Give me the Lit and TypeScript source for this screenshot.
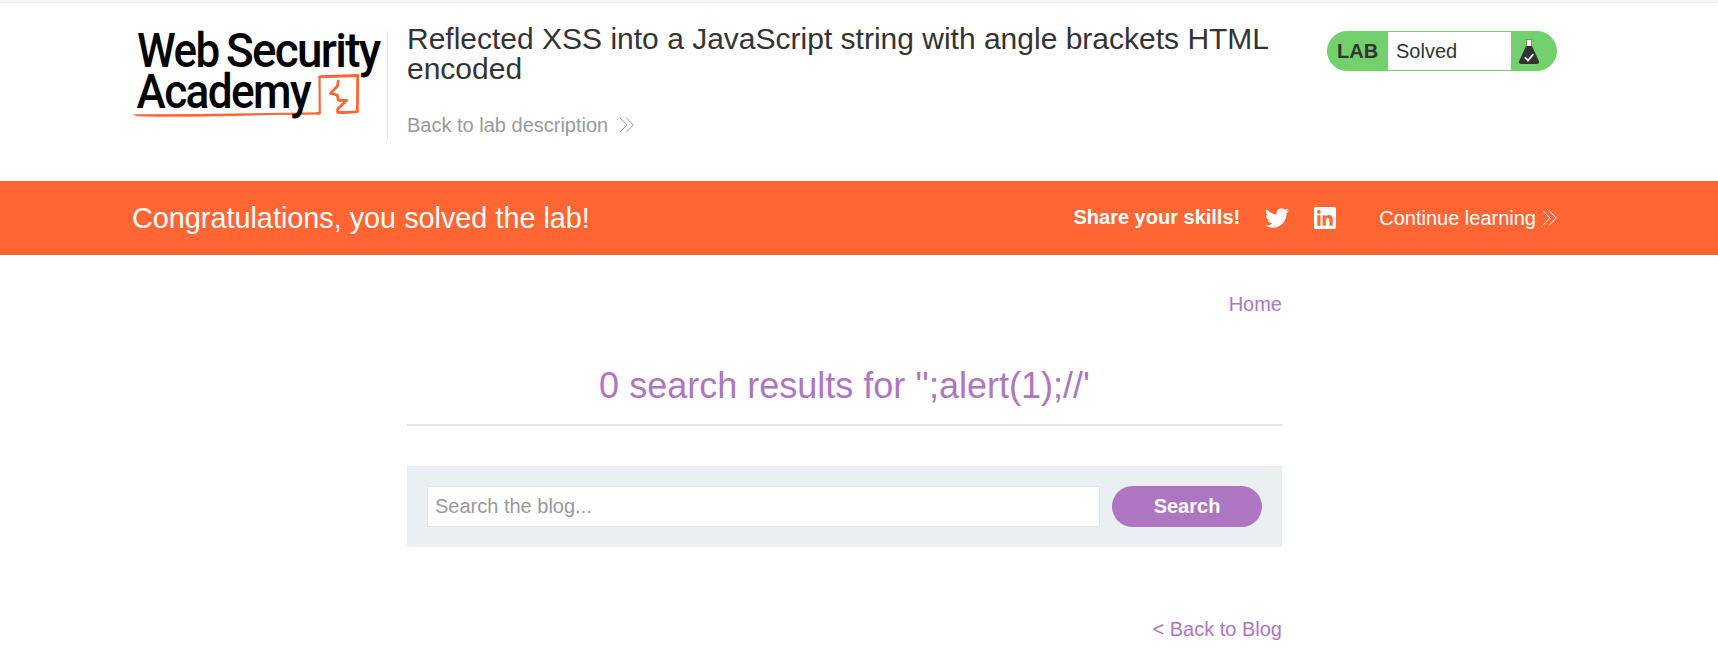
import { LitElement, html, css, svg } from "lit";
import { customElement } from "lit/decorators.js";

const chevrons = svg`<path d="M1 .8 8 8 1 15.2M7.4 .8 14.2 8 7.4 15.2" fill="none" stroke="currentColor" stroke-width="1"/>`;

@customElement("academy-logo")
class AcademyLogo extends LitElement {
  static styles = css`
    :host { display: block; width: 255px; height: 98px; }
    svg { display: block; overflow: visible; }
    .word { font-family: Roboto, sans-serif; font-weight: 500; font-size: 48.5px; letter-spacing: -1.8px; fill: #000; }
    .line { fill: none; stroke: #ff6633; stroke-linejoin: round; stroke-linecap: round; }
  `;
  render() {
    return html`<svg width="255" height="98" viewBox="0 0 255 98">
      <path d="M.3 83.200Q60 83.300 120 82.200T188 81.200L188 83.500Q140 83.800 100 85Q40 86.500 5 85.200Z" fill="#ff6633"/>
      <path class="line" stroke-width="2.200" d="M185 82.300H187.800L187.500 46"/>
      <path class="line" stroke-width="3" d="M187.800 45.800 225.700 44.500"/>
      <path class="line" stroke-width="2.800" d="M225.700 45 225.400 80.600Q214 81.800 206 81.400"/>
      <path class="line" stroke-width="2.800" d="M206.300 50 205.300 55.200 198.500 62.400 205.300 64 206.300 69.300 214.600 69.400 205.700 78V81"/>
      <text class="word" x="5" y="36" textLength="81.500" lengthAdjust="spacingAndGlyphs">Web</text>
      <text class="word" x="94" y="36" textLength="153.500" lengthAdjust="spacingAndGlyphs">Security</text>
      <text class="word" x="4.500" y="76.500" textLength="173.500" lengthAdjust="spacingAndGlyphs">Academy</text>
    </svg>`;
  }
}

@customElement("lab-status")
class LabStatus extends LitElement {
  static styles = css`
    :host { display: flex; box-sizing: border-box; width: 230px; height: 40px; border: 1px solid #72d16d; border-radius: 20px; background: #72d16d; color: #333332; line-height: 38px; overflow: hidden; }
    .tag { width: 60px; box-sizing: border-box; padding-left: 9px; font-weight: 700; }
    .state { width: 123px; box-sizing: border-box; padding-left: 8px; background: #fff; }
    svg { display: block; margin: 7px 0 0 7px; }
  `;
  render() {
    return html`<span class="tag">LAB</span><span class="state">Solved</span>
      <svg width="22" height="26" viewBox="0 0 22 26">
        <path d="M8.500 1V8H13.500V1Z" fill="#fff"/>
        <path d="M7.500 .6H14.500M8.500 1V8M13.500 1V8" stroke="#777" stroke-width=".8"/>
        <path d="M8 7H14L21 22.500Q21.500 25 19 25H3Q.5 25 1 22.500Z" fill="#333332"/>
        <path d="M6.800 18.300 10 21.400 15.300 15.300" fill="none" stroke="#fff" stroke-width="1.700"/>
      </svg>`;
  }
}

@customElement("app-root")
class AppRoot extends LitElement {
  static styles = css`
    :host { display: block; height: 660px; overflow: hidden; background: #fff; color: #333332; font-family: "Liberation Sans", Arial, sans-serif; font-size: 20px; line-height: 24px; }
    a { color: inherit; text-decoration: none; }
    svg { display: block; }
    .strip { height: 3px; box-sizing: border-box; background: #f7f7f7; border-bottom: 1px solid #ebebeb; }
    .head { display: flex; width: 1425px; height: 178px; box-sizing: border-box; padding-top: 28px; margin-left: 132px; align-items: flex-start; }
    .intro { box-sizing: border-box; width: 920px; height: 108px; border-left: 1px solid #e5e5e5; padding-left: 19px; }
    h2 { margin: -7px 0 0; font-size: 30px; line-height: 30px; font-weight: 400; }
    .back { display: flex; align-items: center; gap: 11px; margin-top: 29px; color: #999; }
    .badge { margin-left: 20px; }
    .banner { background: #ff6633; color: #fff; height: 74px; box-sizing: border-box; padding: 0 161px 0 132px; display: flex; align-items: center; }
    .congrats { flex: 1; font-size: 28.8px; line-height: 74px; }
    .share { font-weight: 700; margin-right: 25px; margin-top: -2px; }
    .tw { margin-right: 25px; }
    .next { display: flex; align-items: center; gap: 6px; margin-left: 43px; }
    .page { width: 875px; margin-left: 407px; color: #ae75c2; }
    .home { display: block; text-align: right; padding-top: 37px; }
    h1 { margin: 50px 0 0; padding-bottom: 18px; border-bottom: 2px solid #e5e5e5; text-align: center; font-size: 36px; line-height: 40px; font-weight: 400; }
    .search { display: flex; gap: 12px; box-sizing: border-box; height: 81px; margin-top: 40px; padding: 20px; background: #eaeff2; }
    input { flex: 1; min-width: 0; box-sizing: border-box; border: 1px solid #e5e5e5; border-radius: 0; padding: 0 8px 1px 7px; background: #fff; font: inherit; outline: none; }
    input::placeholder { color: #999; opacity: 1; }
    button { width: 150px; border: 0; border-radius: 21px; background: #ae75c2; color: #fff; font: inherit; font-weight: 700; padding: 0 0 1px; }
    .blog { display: block; text-align: right; margin-top: 70px; }
  `;
  render() {
    return html`
      <div class="strip"></div>
      <header class="head">
        <academy-logo></academy-logo>
        <div class="intro">
          <h2>Reflected XSS into a JavaScript string with angle brackets HTML encoded</h2>
          <a class="back" href="#"><span>Back to lab description</span><svg width="15" height="16">${chevrons}</svg></a>
        </div>
        <lab-status class="badge"></lab-status>
      </header>
      <section class="banner">
        <span class="congrats">Congratulations, you solved the lab!</span>
        <span class="share">Share your skills!</span>
        <svg class="tw" width="24" height="24" viewBox="0 0 24 24"><path fill="#fff" d="M23.950 4.570a10 10 0 0 1-2.820.770 4.960 4.960 0 0 0 2.160-2.720c-.95.550-2 .950-3.130 1.180a4.920 4.920 0 0 0-8.380 4.480C7.690 8.090 4.070 6.130 1.640 3.160a4.820 4.820 0 0 0-.67 2.480c0 1.710.87 3.210 2.190 4.100a4.900 4.900 0 0 1-2.230-.62v.06a4.920 4.920 0 0 0 3.950 4.830 5 5 0 0 1-2.210.080 4.940 4.940 0 0 0 4.600 3.420A9.870 9.870 0 0 1 0 19.540a13.990 13.990 0 0 0 7.550 2.210c9.050 0 14-7.500 14-13.980 0-.21 0-.42-.02-.63a9.940 9.940 0 0 0 2.420-2.570z"/></svg>
        <svg width="22" height="22" viewBox="0 0 22 22"><path fill="#fff" fill-rule="evenodd" d="M1.500 0H20.500Q22 0 22 1.500V20.500Q22 22 20.500 22H1.500Q0 22 0 20.500V1.500Q0 0 1.500 0ZM3.300 8.300V18.700H6.500V8.300ZM4.900 3.100A1.850 1.850 0 1 0 4.900 6.800 1.850 1.850 0 1 0 4.900 3.100ZM8.600 8.300V18.700H11.800V13.500C11.800 10.300 15.400 10.300 15.400 13.300V18.700H18.700V12.500C18.700 7.500 13.500 6.900 11.700 9.700V8.300Z"/></svg>
        <a class="next" href="#"><span>Continue learning</span><svg width="15" height="16">${chevrons}</svg></a>
      </section>
      <main class="page">
        <a class="home" href="#">Home</a>
        <h1>0 search results for '';alert(1);//'</h1>
        <div class="search"><input type="text" placeholder="Search the blog..." /><button>Search</button></div>
        <a class="blog" href="#">&lt; Back to Blog</a>
      </main>`;
  }
}
